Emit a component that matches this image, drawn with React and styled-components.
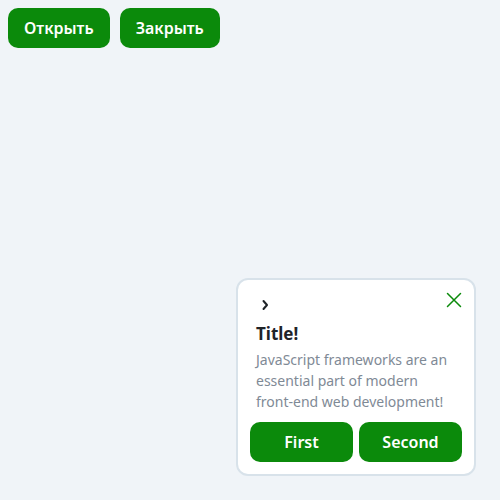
import React from 'react';
import styled, { createGlobalStyle } from 'styled-components';

const GlobalStyle = createGlobalStyle`
  body {
    margin: 0;
    background-color: #F0F4F8;
    font-family: "Noto Sans", sans-serif;
  }
`;

const Page = styled.div`
  display: flex;
  flex-direction: column;
  width: 100%;
  height: 100vh;
  padding: 8px;
  box-sizing: border-box;
`;

const Toolbar = styled.div`
  display: flex;
  gap: 10px;
`;

const Button = styled.button`
  display: flex;
  align-items: center;
  justify-content: center;
  height: 40px;
  padding: 0 16px;
  border: none;
  border-radius: 10px;
  background-color: #0B8A0B;
  color: #FFFFFF;
  font-family: "Noto Sans", sans-serif;
  font-size: 16px;
  font-weight: 600;
  cursor: pointer;
  flex: ${props => (props.grow ? 1 : 'none')};
`;

const Popup = styled.div`
  position: fixed;
  right: 24px;
  bottom: 24px;
  width: 240px;
  box-sizing: border-box;
  display: flex;
  flex-direction: column;
  padding: 12px;
  background-color: #FFFFFF;
  border: 2px solid #D8E2EA;
  border-radius: 12px;
`;

const Header = styled.div`
  display: flex;
  justify-content: space-between;
  align-items: flex-start;
  height: 31px;
  padding: 0 0 0 6px;
`;

const IconButton = styled.button`
  display: flex;
  align-items: center;
  justify-content: center;
  padding: 0;
  margin-top: ${props => props.offset || 0}px;
  border: none;
  background: none;
  color: ${props => props.color};
  cursor: pointer;
`;

const Body = styled.div`
  display: flex;
  flex-direction: column;
  padding: 0 6px;
`;

const Title = styled.div`
  font-size: 17px;
  font-weight: 700;
  color: #1F2328;
  line-height: 22px;
`;

const Text = styled.div`
  margin-top: 4px;
  font-size: 14px;
  line-height: 21px;
  color: #7F8A96;
`;

const Actions = styled.div`
  display: flex;
  gap: 6px;
  margin-top: 10px;
`;

const App = () => {
  return (
    <Page>
      <GlobalStyle />
      <Toolbar>
        <Button>Открыть</Button>
        <Button>Закрыть</Button>
      </Toolbar>

      <Popup>
        <Header>
          <IconButton color="#1F2328" offset={4}>
            <svg width="18" height="18" viewBox="0 0 18 18" fill="none">
              <path d="M7.5 5 L11 9 L7.5 13" stroke="currentColor" strokeWidth="2" strokeLinecap="round" strokeLinejoin="round" />
            </svg>
          </IconButton>
          <IconButton color="#0B8A0B">
            <svg width="16" height="16" viewBox="0 0 16 16" fill="none">
              <path d="M1.5 1.5 L14.5 14.5 M14.5 1.5 L1.5 14.5" stroke="currentColor" strokeWidth="1.5" strokeLinecap="round" />
            </svg>
          </IconButton>
        </Header>
        <Body>
          <Title>Title!</Title>
          <Text>JavaScript frameworks are an essential part of modern front-end web development!</Text>
        </Body>
        <Actions>
          <Button grow>First</Button>
          <Button grow>Second</Button>
        </Actions>
      </Popup>
    </Page>
  );
};

export default App;
